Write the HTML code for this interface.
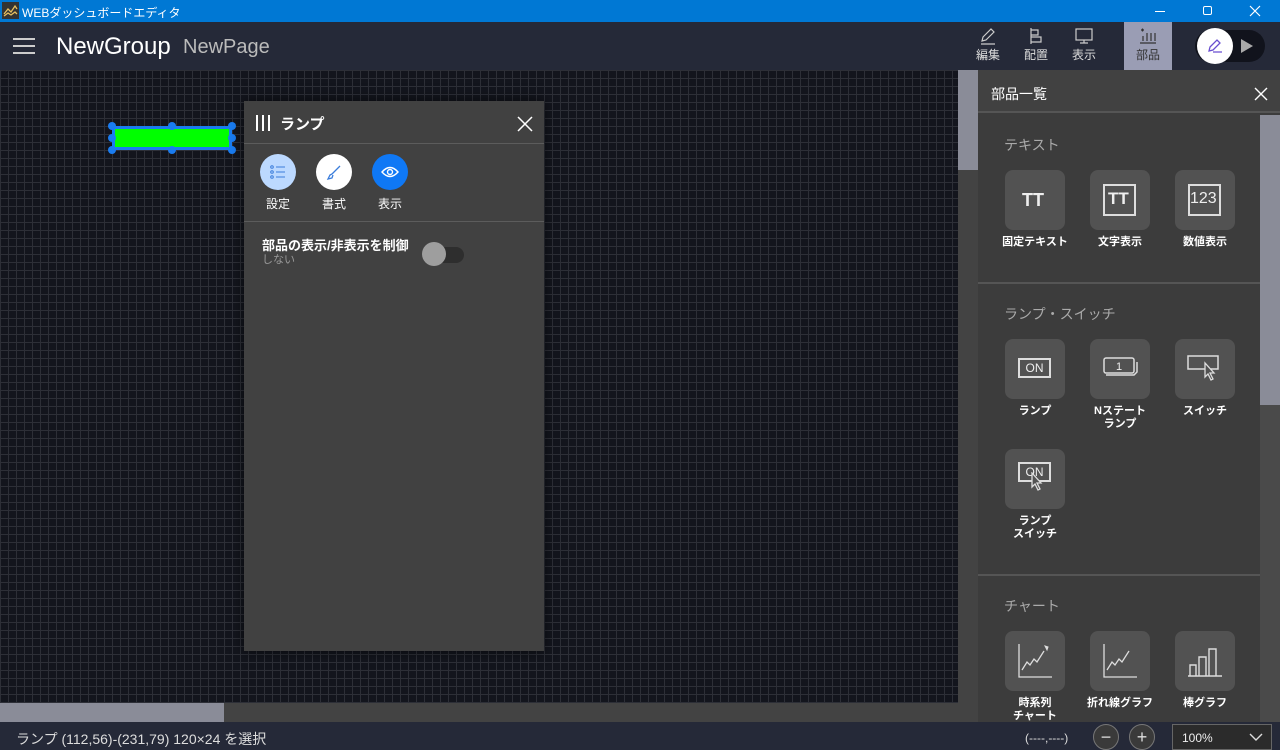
<!DOCTYPE html>
<html><head><meta charset="utf-8"><style>
*{box-sizing:border-box;margin:0;padding:0}
body{width:1280px;height:750px;overflow:hidden;position:relative;font-family:"Liberation Sans","Noto Sans CJK JP",sans-serif;background:#15171f}
.abs{position:absolute}
#title{left:0;top:0;width:1280px;height:22px;background:#0078d4;color:#fff;font-size:12px}
#hdr{left:0;top:22px;width:1280px;height:48px;background:#252938}
#canvas{left:0;top:70px;width:958px;height:633px;background-color:#13151d;
background-image:linear-gradient(#2d2f37 1px,transparent 1px),linear-gradient(90deg,#2d2f37 1px,transparent 1px);background-size:8px 8px}
.tb{color:#ddd;font-size:12px;text-align:center;width:44px;line-height:14px}
.sec{color:#aaa;font-size:14px}
.ic{width:60px;height:60px;background:#525252;border-radius:8px}
.lb{color:#fff;font-size:11px;font-weight:bold;text-align:center;width:90px;line-height:13px}
</style></head><body>
<div id="title" class="abs">
<svg class="abs" style="left:2px;top:2px" width="17" height="17"><rect width="17" height="17" fill="#333"/><path d="M2 12l4-5 3 3 4-6 2 3M2 14l4-3 3 2 4-3 2 2" stroke="#e8c060" fill="none" stroke-width="1.3"/></svg>
<span class="abs" style="left:22px;top:4px">WEBダッシュボードエディタ</span>
<div class="abs" style="left:1155px;top:11px;width:10px;height:1px;background:#fff"></div>
<div class="abs" style="left:1203px;top:6px;width:9px;height:9px;border:1px solid #fff;border-radius:2px"></div>
<svg class="abs" style="left:1249px;top:5px" width="12" height="12"><path d="M1 1L11 11M11 1L1 11" stroke="#fff" stroke-width="1.2"/></svg>
</div>
<div id="hdr" class="abs">
<div class="abs" style="left:13px;top:16px;width:22px;height:2px;background:#ccc;box-shadow:0 7px 0 #ccc,0 14px 0 #ccc"></div>
<span class="abs" style="left:56px;top:11px;color:#fff;font-size:24px">NewGroup</span>
<span class="abs" style="left:183px;top:14px;color:#bbb;font-size:20px">NewPage</span>
<div class="abs tb" style="left:966px;top:5px"><svg width="18" height="18"><path d="M3 14l1-4 8-8 3 3-8 8zM2 17h14" stroke="#ccc" fill="none" stroke-width="1.2"/></svg><br>編集</div>
<div class="abs tb" style="left:1014px;top:5px"><svg width="18" height="18"><path d="M4 1v16M4 3h7v5H4M4 10h10v5H4" stroke="#ccc" fill="none" stroke-width="1.2"/></svg><br>配置</div>
<div class="abs tb" style="left:1062px;top:5px"><svg width="20" height="18"><rect x="2" y="2" width="16" height="11" stroke="#ccc" fill="none" stroke-width="1.2"/><path d="M10 13v3M6 16h8" stroke="#ccc" stroke-width="1.2"/></svg><br>表示</div>
<div class="abs" style="left:1124px;top:0;width:48px;height:48px;background:#9a9db4"></div>
<div class="abs tb" style="left:1126px;top:5px;color:#333"><svg width="18" height="18"><path d="M2 3h3M3.5 1.5v3M4 9v5M8 6v8M12 6v8M16 6v8M1 16h16" stroke="#333" fill="none" stroke-width="1.2"/></svg><br>部品</div>
<div class="abs" style="left:1195px;top:8px;width:70px;height:32px;border-radius:16px;background:#11131c"></div>
<div class="abs" style="left:1197px;top:6px;width:36px;height:36px;border-radius:50%;background:#fff"></div>
<svg class="abs" style="left:1206px;top:15px" width="18" height="18"><path d="M3 14l1-4 7-7 3 3-7 7zM7 15h9" stroke="#6a4fd0" fill="none" stroke-width="1.3"/></svg>
<svg class="abs" style="left:1240px;top:16px" width="14" height="16"><path d="M1 1l12 7-12 7z" fill="#aaa"/></svg>
</div>
<div id="canvas" class="abs"></div>
<div class="abs" style="left:112px;top:126px;width:120px;height:24px;background:#00ff00;border:3px solid #1a7cf0;border-radius:3px"></div>
<div class="abs" style="left:108px;top:122px;width:8px;height:8px;border-radius:50%;background:#1a7cf0;box-shadow:60px 0 0 #1a7cf0,120px 0 0 #1a7cf0,0 12px 0 #1a7cf0,120px 12px 0 #1a7cf0,0 24px 0 #1a7cf0,60px 24px 0 #1a7cf0,120px 24px 0 #1a7cf0"></div>
<div class="abs" style="left:958px;top:70px;width:20px;height:652px;background:#434343"></div>
<div class="abs" style="left:958px;top:70px;width:20px;height:100px;background:#8a8c98"></div>
<div class="abs" style="left:0;top:703px;width:958px;height:19px;background:#434343"></div>
<div class="abs" style="left:0;top:703px;width:224px;height:19px;background:#8a8c98"></div>
<div class="abs" style="left:244px;top:101px;width:300px;height:550px;background:#414141;box-shadow:0 0 12px rgba(0,0,0,.6)">
<div class="abs" style="left:12px;top:14px;width:2px;height:16px;background:#fff;box-shadow:6px 0 0 #fff,12px 0 0 #fff"></div>
<span class="abs" style="left:36px;top:12px;color:#fff;font-size:15px;font-weight:bold">ランプ</span>
<svg class="abs" style="left:273px;top:15px" width="16" height="16"><path d="M1 1L15 15M15 1L1 15" stroke="#fff" stroke-width="1.5"/></svg>
<div class="abs" style="left:0;top:42px;width:300px;height:1px;background:#5c5c5c"></div>
<div class="abs" style="left:16px;top:53px;width:36px;height:36px;border-radius:50%;background:#bcd9ff"></div>
<svg class="abs" style="left:26px;top:63px" width="16" height="16"><circle cx="2" cy="3" r="1.3" fill="none" stroke="#3b7ddb"/><circle cx="2" cy="8" r="1.3" fill="none" stroke="#3b7ddb"/><circle cx="2" cy="13" r="1.3" fill="none" stroke="#3b7ddb"/><path d="M6 3h9M6 8h9M6 13h9" stroke="#3b7ddb"/></svg>
<div class="abs" style="left:72px;top:53px;width:36px;height:36px;border-radius:50%;background:#fff"></div>
<svg class="abs" style="left:82px;top:63px" width="16" height="16"><path d="M14 2L6 10M6 10l-2 1-2 4 4-1 1-3" stroke="#3b7ddb" fill="none" stroke-width="1.3"/></svg>
<div class="abs" style="left:128px;top:53px;width:36px;height:36px;border-radius:50%;background:#0f78f5"></div>
<svg class="abs" style="left:136px;top:63px" width="20" height="16"><path d="M2 8q8-9 16 0q-8 9-16 0z" stroke="#fff" fill="none" stroke-width="1.4"/><circle cx="10" cy="8" r="2.5" fill="none" stroke="#fff" stroke-width="1.4"/></svg>
<span class="abs" style="left:22px;top:94px;color:#fff;font-size:12px">設定</span>
<span class="abs" style="left:78px;top:94px;color:#fff;font-size:12px">書式</span>
<span class="abs" style="left:134px;top:94px;color:#fff;font-size:12px">表示</span>
<div class="abs" style="left:0;top:120px;width:300px;height:1px;background:#5c5c5c"></div>
<span class="abs" style="left:18px;top:137px;color:#fff;font-size:13px;font-weight:bold;line-height:16px">部品の表示/非表示を制御</span>
<span class="abs" style="left:18px;top:153px;color:#999;font-size:11px;line-height:13px">しない</span>
<div class="abs" style="left:180px;top:146px;width:40px;height:16px;border-radius:8px;background:#2e2e2e"></div>
<div class="abs" style="left:178px;top:141px;width:24px;height:24px;border-radius:50%;background:#9e9e9e"></div>
</div>
<div class="abs" style="left:978px;top:70px;width:302px;height:652px;background:#3c3c3c">
<div class="abs" style="left:0;top:0;width:302px;height:43px;background:#414141;border-bottom:2px solid #555"></div>
<span class="abs" style="left:13px;top:14px;color:#fff;font-size:14px">部品一覧</span>
<svg class="abs" style="left:276px;top:17px" width="14" height="14"><path d="M1 1L13 13M13 1L1 13" stroke="#fff" stroke-width="1.4"/></svg>
<div class="abs" style="left:282px;top:45px;width:20px;height:607px;background:#4a4a4a"></div>
<div class="abs" style="left:282px;top:45px;width:20px;height:290px;background:#8a8c98"></div>
<div class="abs" style="left:0;top:212px;width:282px;height:2px;background:#555"></div>
<div class="abs" style="left:0;top:504px;width:282px;height:2px;background:#555"></div>
</div>
<span class="abs sec" style="left:1004px;top:135px">テキスト</span>
<span class="abs sec" style="left:1004px;top:304px">ランプ・スイッチ</span>
<span class="abs sec" style="left:1004px;top:596px">チャート</span>
<div class="abs ic" style="left:1005px;top:170px"></div><div class="abs ic" style="left:1090px;top:170px"></div><div class="abs ic" style="left:1175px;top:170px"></div>
<span class="abs" style="left:1022px;top:190px;color:#eee;font-size:18px;font-weight:bold">TT</span>
<div class="abs" style="left:1103px;top:184px;width:33px;height:32px;border:2px solid #ddd"></div><span class="abs" style="left:1108px;top:189px;color:#eee;font-size:17px;font-weight:bold">TT</span>
<div class="abs" style="left:1188px;top:184px;width:33px;height:32px;border:2px solid #ddd"></div><span class="abs" style="left:1190px;top:190px;color:#eee;font-size:16px">123</span>
<div class="abs lb" style="left:990px;top:236px">固定テキスト</div><div class="abs lb" style="left:1075px;top:236px">文字表示</div><div class="abs lb" style="left:1160px;top:236px">数値表示</div>
<div class="abs ic" style="left:1005px;top:339px"></div><div class="abs ic" style="left:1090px;top:339px"></div><div class="abs ic" style="left:1175px;top:339px"></div>
<div class="abs ic" style="left:1005px;top:449px"></div>
<div class="abs" style="left:1018px;top:358px;width:33px;height:20px;border:2px solid #ddd;color:#eee;font-size:12px;text-align:center;line-height:16px">ON</div>
<svg class="abs" style="left:1102px;top:356px" width="40" height="24"><rect x="2" y="2" width="30" height="15" rx="2" fill="none" stroke="#ddd" stroke-width="1.5"/><path d="M4 19h28l3-3v-10" stroke="#ddd" fill="none" stroke-width="1.5"/><text x="14" y="14" fill="#eee" font-size="11" font-family="Liberation Sans">1</text></svg>
<svg class="abs" style="left:1186px;top:352px" width="40" height="34"><rect x="2" y="4" width="30" height="13" fill="none" stroke="#ddd" stroke-width="1.5"/><path d="M19 11l0 14 3-3 3 6 2-1-3-6h4z" fill="#525252" stroke="#ddd" stroke-width="1.3"/></svg>
<div class="abs" style="left:1018px;top:462px;width:33px;height:20px;border:2px solid #ddd;color:#eee;font-size:12px;text-align:center;line-height:16px">ON</div>
<svg class="abs" style="left:1028px;top:472px" width="20" height="24"><path d="M4 1l0 14 3-3 3 6 2-1-3-6h4z" fill="#525252" stroke="#ddd" stroke-width="1.3"/></svg>
<div class="abs lb" style="left:990px;top:405px">ランプ</div><div class="abs lb" style="left:1075px;top:405px">Nステート<br>ランプ</div><div class="abs lb" style="left:1160px;top:405px">スイッチ</div>
<div class="abs lb" style="left:990px;top:515px">ランプ<br>スイッチ</div>
<div class="abs ic" style="left:1005px;top:631px"></div><div class="abs ic" style="left:1090px;top:631px"></div><div class="abs ic" style="left:1175px;top:631px"></div>
<svg class="abs" style="left:1015px;top:641px" width="40" height="40"><path d="M4 3v33h33M7 29l5-8 3 3 4-6 3 3 7-11" stroke="#ddd" fill="none" stroke-width="1.3"/><path d="M30 5l3 1-1 3z" fill="#ddd" stroke="#ddd"/></svg>
<svg class="abs" style="left:1100px;top:641px" width="40" height="40"><path d="M4 3v33h33M7 29l5-8 3 3 4-6 3 3 7-11" stroke="#ddd" fill="none" stroke-width="1.3"/></svg>
<svg class="abs" style="left:1185px;top:641px" width="40" height="40"><path d="M3 35h34M5 24h6v11H5zM14 16h7v19h-7zM24 8h7v27h-7z" stroke="#ddd" fill="none" stroke-width="1.4"/></svg>
<div class="abs lb" style="left:990px;top:697px">時系列<br>チャート</div><div class="abs lb" style="left:1075px;top:697px">折れ線グラフ</div><div class="abs lb" style="left:1160px;top:697px">棒グラフ</div>
<div class="abs" style="left:0;top:722px;width:1280px;height:28px;background:#252938"></div>
<span class="abs" style="left:16px;top:729px;color:#ddd;font-size:14px">ランプ (112,56)-(231,79) 120×24 を選択</span>
<span class="abs" style="left:1025px;top:731px;color:#ddd;font-size:12px">(----,----)</span>
<div class="abs" style="left:1093px;top:724px;width:26px;height:26px;border-radius:50%;border:1px solid #777;background:#3a3a3a;color:#ddd;text-align:center;line-height:24px;font-size:18px">−</div>
<div class="abs" style="left:1129px;top:724px;width:26px;height:26px;border-radius:50%;border:1px solid #777;background:#3a3a3a;color:#ddd;text-align:center;line-height:24px;font-size:18px">+</div>
<div class="abs" style="left:1172px;top:724px;width:100px;height:26px;border:1px solid #666;background:#2b2b2b;color:#eee;font-size:12px;padding:6px 0 0 9px">100%</div>
<svg class="abs" style="left:1249px;top:732px" width="14" height="10"><path d="M1 2l6 6 6-6" stroke="#ddd" fill="none" stroke-width="1.4"/></svg>
</body></html>
